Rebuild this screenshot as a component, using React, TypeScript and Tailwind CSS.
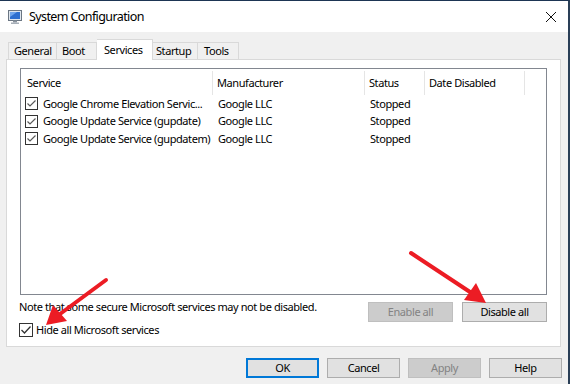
import React from "react";

const font = { fontFamily: '"Noto Sans", "Open Sans", sans-serif', letterSpacing: "-0.42px" };

function ListCheck() {
  return (
    <svg width="13" height="13" viewBox="0 0 13 13" className="shrink-0">
      <rect x="0.5" y="0.5" width="12" height="12" fill="#fff" stroke="#333" />
      <path d="M2.5 6.5 L5 9 L10.5 3.5" fill="none" stroke="#5a5a5a" strokeWidth="1.2" />
    </svg>
  );
}

function DarkCheck() {
  return (
    <svg width="14" height="14" viewBox="0 0 14 14" className="shrink-0">
      <rect x="0.5" y="0.5" width="13" height="13" fill="#fff" stroke="#333" />
      <path d="M2.5 7 L5.5 10 L11.5 3.5" fill="none" stroke="#333" strokeWidth="1.3" />
    </svg>
  );
}

const rows = [
  "Google Chrome Elevation Servic...",
  "Google Update Service (gupdate)",
  "Google Update Service (gupdatem)",
];

export default function App() {
  return (
    <div
      className="relative w-[570px] h-[384px] overflow-hidden bg-[#f0f0f0] text-[11px] text-black border-t border-[#1d3553] border-r-2 border-r-[#2a3f57] flex flex-col"
      style={font}
    >
      {/* Title bar */}
      <div className="h-[31px] bg-white flex items-center shrink-0 pt-[1px]">
        <div className="ml-[7px] w-[16px] h-[16px]">
          <svg width="16" height="16" viewBox="0 0 16 16">
            <rect x="1.5" y="1.5" width="13" height="10" fill="#dfe6ee" stroke="#6b7683" />
            <rect x="3" y="3" width="10" height="7" fill="#2d6fd0" />
            <path d="M3 3 L10 3 L3 8 Z" fill="#6fa6ee" />
            <rect x="6" y="11.5" width="4" height="2" fill="#8a939e" />
            <rect x="4" y="13.5" width="8" height="1.5" fill="#a8b0b9" />
          </svg>
        </div>
        <span className="ml-[6px] text-[12.5px] leading-none tracking-[-0.6px]">System Configuration</span>
        <div className="ml-auto mr-[11px] w-[12px] h-[12px]">
          <svg width="12" height="12" viewBox="0 0 12 12">
            <path d="M1 1 L11 11 M11 1 L1 11" stroke="#111" strokeWidth="1" />
          </svg>
        </div>
      </div>

      {/* Body */}
      <div className="pt-[7px] pl-[6px]">
        {/* Tabs */}
        <div className="flex items-end h-[21px] ml-[2px] relative z-10 -mb-px">
          <div className="w-[49px] h-[18px] border border-b-0 border-[#d9d9d9] flex items-center pl-[5px]">General</div>
          <div className="w-[40px] h-[18px] border border-b-0 border-l-0 border-[#d9d9d9] flex items-center pl-[5px]">Boot</div>
          <div className="w-[56px] h-[21px] border border-b-0 border-l-0 border-[#d9d9d9] bg-white flex items-start pt-[2px] pl-[7px]">Services</div>
          <div className="w-[45px] h-[18px] border border-b-0 border-l-0 border-[#d9d9d9] flex items-center pl-[3px]">Startup</div>
          <div className="w-[41px] h-[18px] border border-b-0 border-l-0 border-[#d9d9d9] flex items-center pl-[6px]">Tools</div>
        </div>

        {/* Panel */}
        <div className="w-[555px] h-[288px] bg-white border border-[#d9d9d9] px-[13px] pt-[8px] flex flex-col">
          {/* List box */}
          <div className="h-[227px] border border-[#828790] bg-white flex flex-col">
            <div className="h-[26px] flex items-center shrink-0 pt-[2px]">
              <div className="w-[192px] pl-[6px] h-full flex items-center border-r border-[#e5e5e5]">Service</div>
              <div className="w-[152px] pl-[4px] h-full flex items-center border-r border-[#e5e5e5]">Manufacturer</div>
              <div className="w-[60px] pl-[4px] h-full flex items-center border-r border-[#e5e5e5]">Status</div>
              <div className="w-[100px] pl-[4px] h-full flex items-center border-r border-[#e5e5e5]">Date Disabled</div>
            </div>
            {rows.map((r) => (
              <div key={r} className="h-[17.5px] flex items-center">
                <div className="w-[192px] pl-[4px] flex items-center gap-[5px] whitespace-nowrap">
                  <ListCheck />
                  <span>{r}</span>
                </div>
                <div className="w-[152px] pl-[5px]">Google LLC</div>
                <div className="w-[60px] pl-[5px]">Stopped</div>
              </div>
            ))}
          </div>

          {/* Note + buttons */}
          <div className="flex justify-between mt-[3px]">
            <div className="flex flex-col">
              <div className="h-[16px] leading-[16px] -ml-px whitespace-nowrap pt-[1px]">Note that some secure Microsoft services may not be disabled.</div>
              <div className="mt-[8px] flex items-center gap-[3px] -ml-px">
                <DarkCheck />
                <span>Hide all Microsoft services</span>
              </div>
            </div>
            <div className="flex gap-[9px] mt-[4px]">
              <div className="w-[85px] h-[20px] bg-[#cccccc] border border-[#bfbfbf] text-[#838383] flex items-center justify-center">Enable all</div>
              <div className="w-[85px] h-[20px] bg-[#e1e1e1] border border-[#adadad] flex items-center justify-center">Disable all</div>
            </div>
          </div>
        </div>
      </div>

      {/* Bottom buttons */}
      <div className="flex justify-end gap-[8px] pr-[6px] mt-[11px]">
        <div className="w-[73px] h-[20px] bg-[#e1e1e1] border-2 border-[#0078d7] flex items-center justify-center">OK</div>
        <div className="w-[73px] h-[20px] bg-[#e1e1e1] border border-[#adadad] flex items-center justify-center">Cancel</div>
        <div className="w-[73px] h-[20px] bg-[#cccccc] border border-[#bfbfbf] text-[#838383] flex items-center justify-center">Apply</div>
        <div className="w-[73px] h-[20px] bg-[#e1e1e1] border border-[#adadad] flex items-center justify-center">Help</div>
      </div>

      {/* Red arrows */}
      <svg className="absolute left-0 top-0 pointer-events-none" width="570" height="384" viewBox="0 0 570 384">
        <line x1="106" y1="279" x2="60" y2="313" stroke="#ec1c24" strokeWidth="4" strokeLinecap="round" />
        <polygon points="46,324 53,304 67,320" fill="#ec1c24" />
        <line x1="411" y1="252" x2="470" y2="291" stroke="#ec1c24" strokeWidth="4" strokeLinecap="round" />
        <polygon points="486,302 464,299 476,282" fill="#ec1c24" />
      </svg>
    </div>
  );
}
